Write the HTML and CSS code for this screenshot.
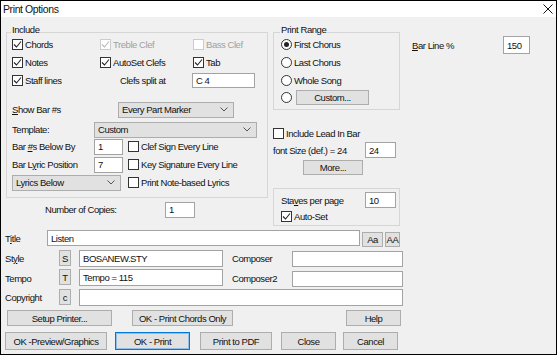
FILE: index.html
```html
<!DOCTYPE html>
<html>
<head>
<meta charset="utf-8">
<link rel="stylesheet" href="styles.css">
</head>
<body>
<div class="win">
  <div class="titlebar">
    <span class="title">Print Options</span>
    <svg class="close" width="10" height="10" viewBox="0 0 10 10"><path d="M0.5 0.5 L9.5 9.5 M9.5 0.5 L0.5 9.5" stroke="#111" stroke-width="1" fill="none"/></svg>
  </div>
  <div class="top">
    <div class="col-left">
      <div class="group include">
        <span class="legend">Include</span>
        <div class="row h18">
          <span class="cb w88"><span class="box"><svg viewBox="0 0 9 9"><path d="M1 4.5 L3.5 7 L8 1.5" /></svg></span>Chords</span>
          <span class="cb w93 disabled"><span class="box"><svg viewBox="0 0 9 9"><path d="M1 4.5 L3.5 7 L8 1.5" /></svg></span>Treble Clef</span>
          <span class="cb disabled"><span class="box"></span>Bass Clef</span>
        </div>
        <div class="row h18">
          <span class="cb w88"><span class="box"><svg viewBox="0 0 9 9"><path d="M1 4.5 L3.5 7 L8 1.5" /></svg></span>Notes</span>
          <span class="cb w93"><span class="box"><svg viewBox="0 0 9 9"><path d="M1 4.5 L3.5 7 L8 1.5" /></svg></span>AutoSet Clefs</span>
          <span class="cb"><span class="box"><svg viewBox="0 0 9 9"><path d="M1 4.5 L3.5 7 L8 1.5" /></svg></span>Tab</span>
        </div>
        <div class="row h18">
          <span class="cb w108"><span class="box"><svg viewBox="0 0 9 9"><path d="M1 4.5 L3.5 7 L8 1.5" /></svg></span>Staff lines</span>
          <span class="lbl w72">Clefs split at</span>
          <span class="input w63 h15">C 4</span>
        </div>
        <div class="row h19 mt11">
          <span class="lbl w106"><u>S</u>how Bar #s</span>
          <span class="dd w116 h16"><span>Every Part Marker</span><svg class="chev" viewBox="0 0 8 5"><path d="M0.5 0.5 L4 4 L7.5 0.5"/></svg></span>
        </div>
        <div class="row h17 mt2">
          <span class="lbl w82">Template:</span>
          <span class="dd w163 h16"><span>Custom</span><svg class="chev" viewBox="0 0 8 5"><path d="M0.5 0.5 L4 4 L7.5 0.5"/></svg></span>
        </div>
        <div class="row h17">
          <span class="lbl w82">Bar <u>#</u>s Below By</span>
          <span class="input w29 h16">1</span>
          <span class="cb ml5"><span class="box"></span>Clef Sign Every Line</span>
        </div>
        <div class="row h17 mt1">
          <span class="lbl w82">Bar L<u>y</u>ric Position</span>
          <span class="input w29 h16">7</span>
          <span class="cb ml5"><span class="box"></span>Key Signature Every Line</span>
        </div>
        <div class="row h17 mt1">
          <span class="dd w109 h16"><span>Lyrics Below</span><svg class="chev" viewBox="0 0 8 5"><path d="M0.5 0.5 L4 4 L7.5 0.5"/></svg></span>
          <span class="cb ml7"><span class="box"></span>Print Note-based Lyrics</span>
        </div>
      </div>
      <div class="row h17 mt3 copies">
        <span class="lbl w120">Number of Copies:</span>
        <span class="input w30 h16">1</span>
      </div>
    </div>

    <div class="col-mid">
      <div class="group range">
        <span class="legend">Print Range</span>
        <div class="row h18"><span class="rb"><span class="circle on"></span>First Chorus</span></div>
        <div class="row h18"><span class="rb"><span class="circle"></span>Last Chorus</span></div>
        <div class="row h18"><span class="rb"><span class="circle"></span>Whole Song</span></div>
        <div class="row h16"><span class="rb"><span class="circle"></span></span><span class="btn w73 h15 ml2">Custom...</span></div>
      </div>
      <div class="row h18 mt14">
        <span class="cb"><span class="box"></span>Include Lead In Bar</span>
      </div>
      <div class="row h16">
        <span class="lbl w92">font Size (def.) = 24</span>
        <span class="input w31 h16">24</span>
      </div>
      <div class="row mt2">
        <span class="btn w60 h15 ml30">More...</span>
      </div>
      <div class="group staves">
        <div class="row h16">
          <span class="lbl w84">Sta<u>v</u>es per page</span>
          <span class="input w31 h16">10</span>
        </div>
        <div class="row h16">
          <span class="cb"><span class="box"><svg viewBox="0 0 9 9"><path d="M1 4.5 L3.5 7 L8 1.5" /></svg></span>Auto-Set</span>
        </div>
      </div>
    </div>

    <div class="col-right">
      <div class="row h18">
        <span class="lbl w91"><u>B</u>ar Line %</span>
        <span class="input w27 h18">150</span>
      </div>
    </div>
  </div>

  <div class="bottom">
    <div class="row h17">
      <span class="lbl w42">T<u>i</u>tle</span>
      <span class="input w313 h16 top-al">Listen</span>
      <span class="btn w21 h15 ml2 bot-al">Aa</span>
      <span class="btn w15 h15 ml2 bot-al">AA</span>
    </div>
    <div class="row h17 mt3">
      <span class="lbl w54">St<u>y</u>le</span>
      <span class="btn w12 h16 top-al">S</span>
      <span class="input w144 h17 ml8">BOSANEW.STY</span>
      <span class="lbl w60 ml9">Composer</span>
      <span class="input w111 h16">&nbsp;</span>
    </div>
    <div class="row h18 mt2">
      <span class="lbl w54">Tempo</span>
      <span class="btn w12 h16 top-al">T</span>
      <span class="input w144 h17 ml8 top-al">Tempo = 115</span>
      <span class="lbl w60 ml9">Composer2</span>
      <span class="input w111 h16 bot-al">&nbsp;</span>
    </div>
    <div class="row h17 mt2">
      <span class="lbl w54">Copyright</span>
      <span class="btn w12 h16 top-al">c</span>
      <span class="input w324 h17 ml8">&nbsp;</span>
    </div>
    <div class="row h16 mt4">
      <span class="btn w105 h16 ml2">Setup Printer...</span>
      <span class="btn w101 h16 ml20">OK - Print Chords Only</span>
      <span class="btn w55 h16 ml113">Help</span>
    </div>
    <div class="row h18 mt6">
      <span class="btn w102 h18">OK -Preview/Graphics</span>
      <span class="btn default w75 h18 ml8">OK - Print</span>
      <span class="btn w72 h18 ml10">Print to PDF</span>
      <span class="btn w55 h18 ml9">Close</span>
      <span class="btn w55 h18 ml7">Cancel</span>
    </div>
  </div>
</div>
</body>
</html>
```

FILE: styles.css
```css
* { box-sizing: border-box; }
html, body { margin: 0; padding: 0; }
body {
  width: 557px;
  height: 355px;
  overflow: hidden;
  font-family: "Liberation Sans", Arial, sans-serif;
  font-size: 9.5px;
  letter-spacing: -0.45px;
  color: #111;
  background: #f0f0f0;
}
u { text-decoration: underline; text-underline-offset: 1px; }

.win {
  width: 557px;
  height: 355px;
  border: 1px solid #000;
  background: #f0f0f0;
  display: flex;
  flex-direction: column;
}
.titlebar {
  height: 16px;
  flex: none;
  background: #fff;
  display: flex;
  align-items: center;
  justify-content: space-between;
  padding: 0 3px 0 2px;
  font-size: 10.5px;
  letter-spacing: -0.4px;
}
.close { width: 10px; height: 10px; }

.top {
  display: flex;
  align-items: flex-start;
  height: 213px;
  flex: none;
}
.col-left { margin-left: 5px; width: 262px; }
.col-mid { margin-left: 5px; width: 127px; }
.col-right { margin-left: 12px; margin-top: 19px; }

.group {
  position: relative;
  border: 1px solid #d6d6d6;
}
.legend {
  position: absolute;
  top: -9px;
  line-height: 12px;
  padding: 0 1px;
  background: #f0f0f0;
}
.include { margin-top: 15px; height: 166px; padding: 2px 0 0 5px; }
.include .legend { left: 4px; }
.range { margin-top: 15px; height: 78px; padding: 2px 0 0 7px; }
.range .legend { left: 6px; }
.staves { margin-top: 13px; height: 38px; padding: 3px 0 0 7px; }
.copies { padding-left: 39px; }

.row { display: flex; align-items: center; }
.bottom { padding-left: 4px; }

.lbl { white-space: nowrap; flex: none; }
.cb, .rb { display: flex; align-items: center; white-space: nowrap; flex: none; }
.box {
  width: 11px; height: 11px;
  border: 1px solid #333;
  background: #fff;
  margin-right: 2px;
  display: flex; align-items: center; justify-content: center;
  flex: none;
}
.box svg { width: 9px; height: 9px; fill: none; stroke: #222; stroke-width: 1.1; }
.cb.disabled { color: #a0a0a0; }
.cb.disabled .box { border-color: #cccccc; }
.cb.disabled .box svg { stroke: #b8b8b8; }

.circle {
  width: 11px; height: 11px;
  border: 1px solid #333;
  border-radius: 50%;
  background: #fff;
  margin-right: 2px;
  display: flex; align-items: center; justify-content: center;
  flex: none;
}
.circle.on::after {
  content: "";
  width: 5px; height: 5px;
  border-radius: 50%;
  background: #222;
}

.input {
  background: #fff;
  border: 1px solid #a3a3a3;
  padding-left: 3px;
  display: flex; align-items: center;
  flex: none;
  white-space: nowrap;
}
.btn {
  background: #e1e1e1;
  border: 1px solid #adadad;
  display: flex; align-items: center; justify-content: center;
  flex: none;
  white-space: nowrap;
}
.btn.default { border-color: #0078d7; box-shadow: inset 0 0 0 1px #8fc0ec; }
.dd {
  background: #e1e1e1;
  border: 1px solid #adadad;
  display: flex; align-items: center; justify-content: space-between;
  padding: 0 5px 0 3px;
  flex: none;
  white-space: nowrap;
}
.chev { width: 8px; height: 5px; fill: none; stroke: #555; stroke-width: 1; }
.top-al { align-self: flex-start; }
.bot-al { align-self: flex-end; }

.h15 { height: 15px; } .h16 { height: 16px; } .h17 { height: 17px; }
.h18 { height: 18px; } .h19 { height: 19px; }
.mt1 { margin-top: 1px; } .mt2 { margin-top: 2px; } .mt3 { margin-top: 3px; }
.mt4 { margin-top: 4px; } .mt6 { margin-top: 6px; } .mt11 { margin-top: 11px; }
.mt14 { margin-top: 14px; }
.ml2 { margin-left: 2px; } .ml5 { margin-left: 5px; } .ml7 { margin-left: 7px; }
.ml8 { margin-left: 8px; } .ml9 { margin-left: 9px; } .ml10 { margin-left: 10px; }
.ml20 { margin-left: 20px; } .ml30 { margin-left: 30px; } .ml113 { margin-left: 113px; }
.w12 { width: 12px; } .w15 { width: 15px; } .w21 { width: 21px; } .w27 { width: 27px; }
.w29 { width: 29px; } .w30 { width: 30px; } .w31 { width: 31px; } .w42 { width: 42px; }
.w54 { width: 54px; } .w55 { width: 55px; } .w60 { width: 60px; } .w63 { width: 63px; }
.w72 { width: 72px; } .w73 { width: 73px; } .w75 { width: 75px; } .w82 { width: 82px; }
.w84 { width: 84px; } .w88 { width: 88px; } .w91 { width: 91px; } .w92 { width: 92px; }
.w93 { width: 93px; } .w101 { width: 101px; } .w102 { width: 102px; } .w105 { width: 105px; }
.w106 { width: 106px; } .w108 { width: 108px; } .w109 { width: 109px; } .w111 { width: 111px; }
.w116 { width: 116px; } .w120 { width: 120px; } .w144 { width: 144px; } .w163 { width: 163px; }
.w313 { width: 313px; } .w324 { width: 324px; }
```
